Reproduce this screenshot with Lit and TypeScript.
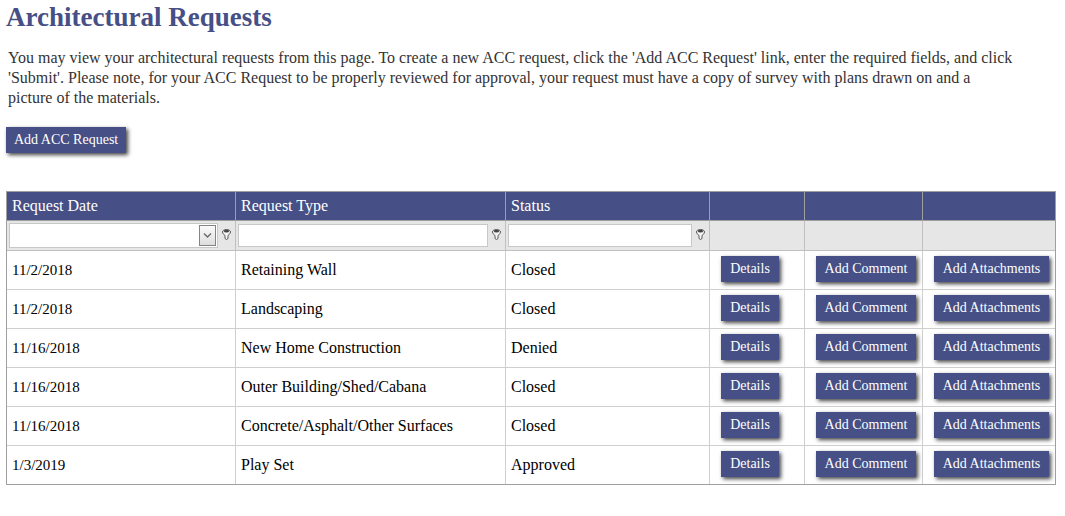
import { LitElement, html, css, svg } from "lit";
import { customElement, property } from "lit/decorators.js";

interface ArchRequest {
  date: string;
  type: string;
  status: string;
}

const REQUESTS: ArchRequest[] = [
  { date: "11/2/2018", type: "Retaining Wall", status: "Closed" },
  { date: "11/2/2018", type: "Landscaping", status: "Closed" },
  { date: "11/16/2018", type: "New Home Construction", status: "Denied" },
  { date: "11/16/2018", type: "Outer Building/Shed/Cabana", status: "Closed" },
  { date: "11/16/2018", type: "Concrete/Asphalt/Other Surfaces", status: "Closed" },
  { date: "1/3/2019", type: "Play Set", status: "Approved" },
];

const funnel = svg`
  <path d="M0.5 3 C0.5 -0.2 8.5 -0.2 8.5 3 C8.5 5 6 5.6 6 7.2 V9.5 Q4.5 11.5 3 9.5 V7.2 C3 5.6 0.5 5 0.5 3 Z" fill="#f4f4f4" stroke="#555"/>
  <ellipse cx="4.5" cy="2.2" rx="2.6" ry="1.4" fill="#444"/>`;

@customElement("filter-cell")
export class FilterCell extends LitElement {
  @property() label = "";
  @property({ type: Boolean }) dropdown = false;

  static styles = css`
    :host {
      display: flex;
      align-items: center;
      padding: 0 0 0 2px;
    }
    .box {
      box-sizing: border-box;
      display: flex;
      flex: 1;
      min-width: 0;
      height: 23px;
      padding: 1px;
      background: #fff;
      border: 1px solid #c8c8c8;
    }
    .date-box {
      height: 25px;
    }
    .input {
      flex: 1;
      min-width: 0;
      padding: 0 4px;
      border: 0;
      outline: 0;
      background: transparent;
      font: 15px "Liberation Serif", serif;
    }
    .arrow,
    .filter {
      display: flex;
      align-items: center;
      justify-content: center;
      padding: 0;
    }
    .arrow {
      width: 17px;
      border: 1px solid #848484;
      background: linear-gradient(#fafafa, #dedede);
    }
    .filter {
      width: 17px;
      height: 20px;
      border: 0;
      background: none;
    }
  `;

  render() {
    return html`
      <div class=${this.dropdown ? "box date-box" : "box"}>
        <input class="input" type="text" aria-label=${"Filter by " + this.label} />
        ${this.dropdown
          ? html`<button class="arrow" aria-label="Open calendar">
              <svg width="9" height="5" viewBox="0 0 9 5">
                <path d="M1 0.5 L4.5 4 L8 0.5" fill="none" stroke="#6a6a6a" stroke-width="1.4" />
              </svg>
            </button>`
          : null}
      </div>
      <button class="filter" aria-label=${"Filter options for " + this.label}>
        <svg width="9" height="13" viewBox="0 0 9 13">${funnel}</svg>
      </button>
    `;
  }
}

@customElement("app-root")
export class AppRoot extends LitElement {
  static styles = css`
    :host {
      display: block;
      padding: 0 9px 30px 6px;
      background: #fff;
      color: #333;
      font-family: "Palatino Linotype", "Liberation Serif", serif;
    }
    .title {
      margin: 0;
      color: #464f86;
      font-size: 27px;
      line-height: 34px;
      font-weight: bold;
    }
    .intro {
      margin: 14px 0 19px 2px;
      font-size: 16px;
      line-height: 20px;
    }
    .button {
      display: block;
      height: 26px;
      margin: 0;
      padding: 0 8px;
      border: 0;
      background: #464f86;
      box-shadow: 2px 2px 4px #444;
      color: #fff;
      font: inherit;
      font-size: 14px;
      line-height: 26px;
      white-space: nowrap;
      cursor: pointer;
    }
    .grid {
      width: 100%;
      margin-top: 38px;
      table-layout: fixed;
      border: 1px solid #9f9f9f;
      border-collapse: separate;
      border-spacing: 0;
      color: #000;
      font-size: 16px;
    }
    .date { width: 229px; }
    .type { width: 270px; }
    .status { width: 204px; }
    .details { width: 95px; }
    .comment { width: 118px; }
    .attach { width: 132px; }
    .head,
    .tool,
    .cell {
      box-sizing: border-box;
      border: solid #cfcfcf;
      border-width: 0 1px 1px 0;
      text-align: left;
    }
    .head {
      height: 29px;
      padding: 0 5px;
      border-color: #9f9f9f;
      background: #464f86;
      color: #fff;
      font-weight: normal;
    }
    .tool {
      height: 30px;
      padding: 0;
      border-color: #c0c0c0;
      background: #e6e6e6;
    }
    .cell {
      height: 39px;
      padding: 0 5px;
    }
    .date-cell {
      font-size: 15px;
    }
    .action {
      padding: 5px 5px 7px 11px;
    }
    .action .button {
      min-width: 58px;
    }
    .comment-button { width: 100px; }
    .attach-button { width: 115px; }
    .head:last-child,
    .tool:last-child,
    .cell:last-child {
      border-right: 0;
    }
    .row:last-child .cell {
      height: 38px;
      border-bottom: 0;
    }
  `;

  render() {
    return html`
      <h1 class="title">Architectural Requests</h1>
      <p class="intro">
        You may view your architectural requests from this page. To create a new ACC request, click the 'Add ACC Request' link, enter the required fields, and click<br />
        'Submit'. Please note, for your ACC Request to be properly reviewed for approval, your request must have a copy of survey with plans drawn on and a<br />
        picture of the materials.
      </p>
      <button class="button">Add ACC Request</button>
      <table class="grid">
        <colgroup>
          <col class="date" /><col class="type" /><col class="status" />
          <col class="details" /><col class="comment" /><col class="attach" />
        </colgroup>
        <thead>
          <tr>
            <th class="head">Request Date</th>
            <th class="head">Request Type</th>
            <th class="head">Status</th>
            <th class="head"></th>
            <th class="head"></th>
            <th class="head"></th>
          </tr>
          <tr>
            <td class="tool"><filter-cell label="Request Date" dropdown></filter-cell></td>
            <td class="tool"><filter-cell label="Request Type"></filter-cell></td>
            <td class="tool"><filter-cell label="Status"></filter-cell></td>
            <td class="tool"></td>
            <td class="tool"></td>
            <td class="tool"></td>
          </tr>
        </thead>
        <tbody>
          ${REQUESTS.map(
            (r) => html`<tr class="row">
              <td class="cell date-cell">${r.date}</td>
              <td class="cell">${r.type}</td>
              <td class="cell">${r.status}</td>
              <td class="cell action"><button class="button">Details</button></td>
              <td class="cell action"><button class="button comment-button">Add Comment</button></td>
              <td class="cell action"><button class="button attach-button">Add Attachments</button></td>
            </tr>`
          )}
        </tbody>
      </table>
    `;
  }
}
